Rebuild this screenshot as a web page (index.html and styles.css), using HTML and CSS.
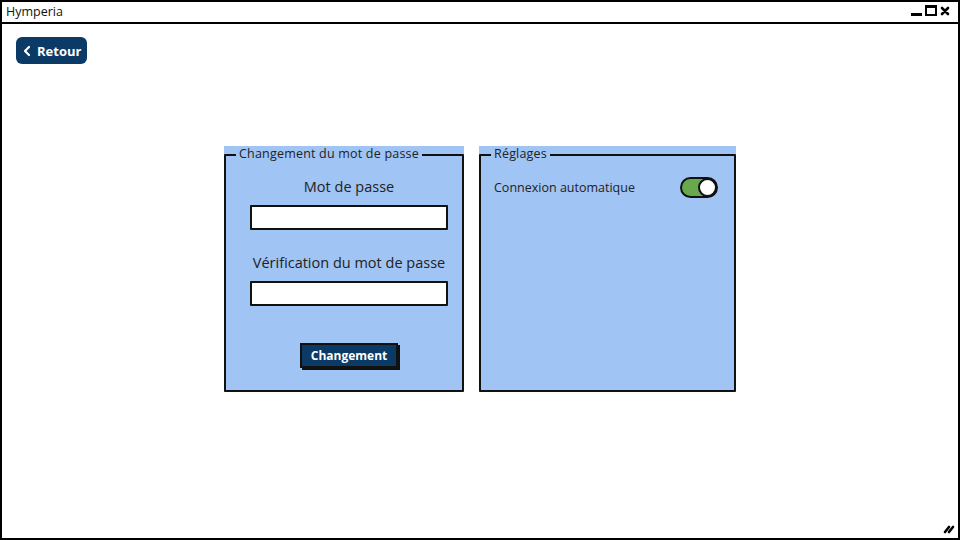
FILE: index.html
```html
<!DOCTYPE html>
<html lang="fr">
<head>
<meta charset="utf-8">
<title>Hymperia</title>
<link rel="stylesheet" href="styles.css">
</head>
<body>
<div class="window">
  <div class="titlebar">
    <span class="title">Hymperia</span>
    <svg class="controls" width="42" height="14" viewBox="0 0 42 14">
      <rect x="1" y="9" width="11" height="3" fill="#000"/>
      <rect x="16" y="2" width="10" height="9" fill="none" stroke="#000" stroke-width="2"/>
      <rect x="16" y="1" width="10" height="3" fill="#000"/>
      <path d="M32 4 L38 10 M38 4 L32 10" stroke="#000" stroke-width="2.6" stroke-linecap="round"/>
    </svg>
  </div>
  <div class="content">
    <button class="back"><svg width="9" height="12" viewBox="0 0 9 12"><path d="M7 2 L3 6 L7 10" fill="none" stroke="#fff" stroke-width="2.2" stroke-linecap="round" stroke-linejoin="round"/></svg>Retour</button>
    <div class="panels">
      <div class="panel panel-left">
        <div class="frame frame-left">
          <span class="legend">Changement du mot de passe</span>
          <label class="field-label">Mot de passe</label>
          <div class="input"></div>
          <label class="field-label field-label-2">Vérification du mot de passe</label>
          <div class="input"></div>
          <button class="change">Changement</button>
        </div>
      </div>
      <div class="panel panel-right">
        <div class="frame frame-right">
          <span class="legend">Réglages</span>
          <div class="setting">
            <span class="setting-label">Connexion automatique</span>
            <span class="toggle"><span class="knob"></span></span>
          </div>
        </div>
      </div>
    </div>
    <svg class="grip" width="12" height="11" viewBox="0 0 12 11">
      <path d="M2 9 L6 4 M6 9 L10 4" stroke="#000" stroke-width="2.6" stroke-linecap="round"/>
    </svg>
  </div>
</div>
</body>
</html>
```
FILE: styles.css
```css
* { box-sizing: border-box; }
html, body { margin: 0; padding: 0; background: #fff; }
body {
  font-family: "Open Sans", "Liberation Sans", sans-serif;
  color: #1f1f1f;
}
.window {
  width: 960px;
  height: 540px;
  border: 2px solid #000;
  display: flex;
  flex-direction: column;
  overflow: hidden;
}
.titlebar {
  height: 22px;
  border-bottom: 2px solid #000;
  display: flex;
  align-items: center;
  justify-content: space-between;
  padding: 0 6px 0 4px;
  flex: none;
}
.title { font-size: 12.5px; line-height: 16px; color: #111; }
.controls { display: block; margin-top: -2px; }
.content {
  flex: 1;
  position: relative;
  padding: 13px 0 0 14px;
}
.back {
  display: flex;
  align-items: center;
  gap: 6px;
  width: 71px;
  height: 27px;
  padding: 0 0 0 6px;
  background: #0b3a66;
  color: #fff;
  border: none;
  border-radius: 6px;
  font-family: "Open Sans", "Liberation Sans", sans-serif;
  font-weight: 700;
  font-size: 13px;
}
.back svg { display: block; }
.panels {
  display: flex;
  justify-content: center;
  gap: 15px;
  margin: 82px 0 0 -14px;
}
.panel {
  background: #a0c4f4;
  padding-top: 8px;
  height: 246px;
  display: flex;
}
.panel-left { width: 240px; }
.panel-right { width: 257px; }
.frame {
  flex: 1;
  position: relative;
  border: 2px solid #111;
  border-radius: 1px;
}
.legend {
  position: absolute;
  top: -10px;
  left: 10px;
  padding: 0 3px;
  background: #a0c4f4;
  font-size: 12.5px;
  letter-spacing: 0.2px;
  line-height: 16px;
  color: #222;
}
.frame-left {
  display: flex;
  flex-direction: column;
  align-items: center;
  padding: 21px 0 0 10px;
}
.field-label {
  font-size: 14.5px;
  line-height: 20px;
  color: #222;
}
.field-label-2 { margin-top: 23px; }
.input {
  width: 198px;
  height: 25px;
  margin-top: 8px;
  background: #fff;
  border: 2px solid #111;
  border-radius: 1px;
}
.change {
  margin-top: 37px;
  width: 98px;
  height: 25px;
  background: #0b3a66;
  color: #fff;
  border: 2px solid #111;
  box-shadow: 2px 2px 0 #111;
  font-family: "Open Sans", "Liberation Sans", sans-serif;
  font-weight: 700;
  font-size: 12px;
  padding: 0 0 1px;
}
.frame-right { padding: 21px 16px 0 13px; }
.setting {
  display: flex;
  align-items: center;
  justify-content: space-between;
}
.setting-label { font-size: 12.5px; line-height: 20px; color: #222; }
.toggle {
  position: relative;
  width: 38px;
  height: 21px;
  background: #68a84f;
  border: 2px solid #111;
  border-radius: 11px;
}
.knob {
  position: absolute;
  right: -1px;
  top: -1px;
  width: 19px;
  height: 19px;
  border-radius: 50%;
  background: #fff;
  border: 2px solid #111;
}
.grip {
  position: absolute;
  right: 3px;
  bottom: 4px;
}
```
